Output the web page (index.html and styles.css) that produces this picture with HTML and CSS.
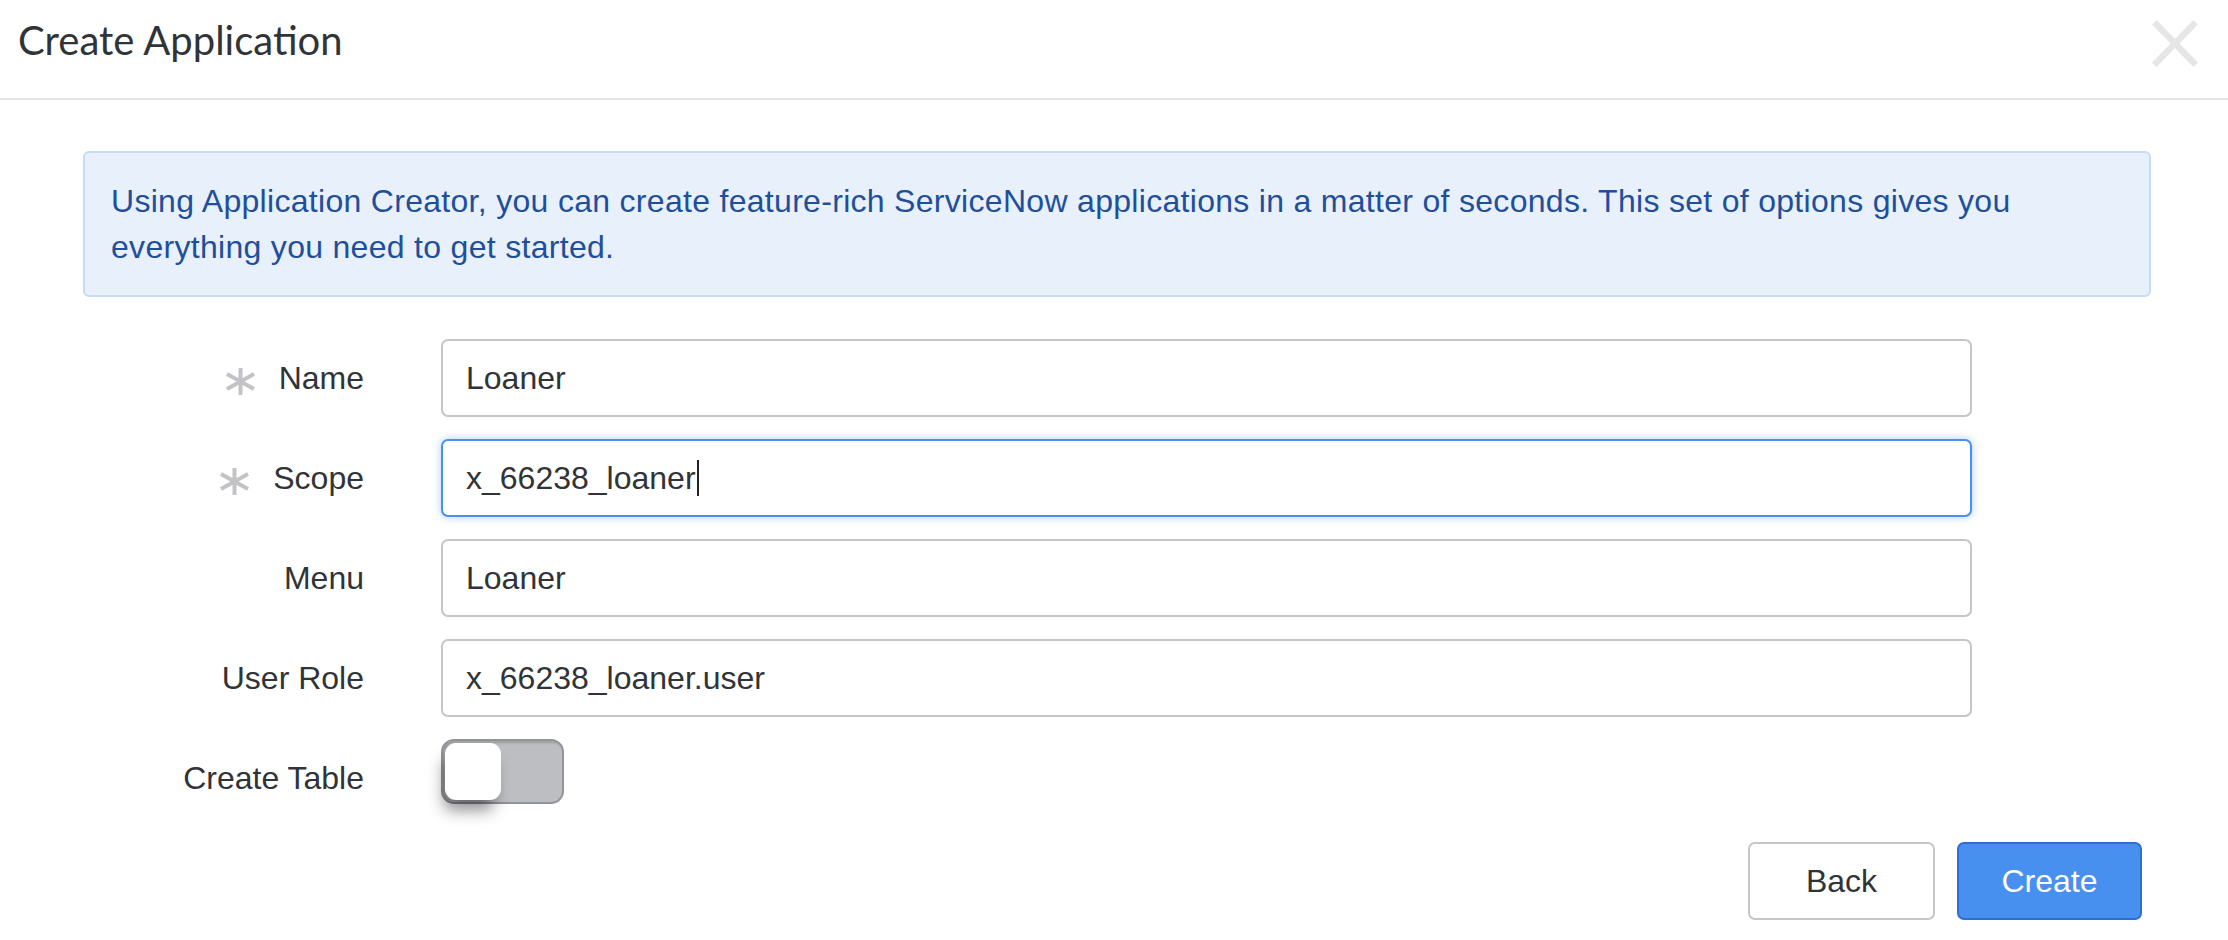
FILE: index.html
```html
<!DOCTYPE html>
<html lang="en">
<head>
<meta charset="utf-8">
<title>Create Application</title>
<link rel="stylesheet" href="styles.css">
</head>
<body>
<div class="modal">
  <header class="modal-header">
    <h1 class="modal-title">Create Application</h1>
    <button class="close" aria-label="Close">
      <svg width="46" height="47" viewBox="0 0 46 47"><path d="M2.3 2.3 L43.7 44.7 M43.7 2.3 L2.3 44.7" stroke="#e6e6e6" stroke-width="6.5" fill="none"/></svg>
    </button>
  </header>
  <div class="modal-body">
    <div class="alert">Using Application Creator, you can create feature-rich ServiceNow applications in a matter of seconds. This set of options gives you everything you need to get started.</div>
    <div class="form">
      <div class="label"><svg class="req" width="31" height="27" viewBox="0 0 31 27"><path d="M15.5 0 V27 M2 6 L29 21 M2 21 L29 6" stroke="#c3c3c7" stroke-width="4" fill="none"/></svg><span>Name</span></div>
      <div class="field">Loaner</div>
      <div class="label"><svg class="req" width="31" height="27" viewBox="0 0 31 27"><path d="M15.5 0 V27 M2 6 L29 21 M2 21 L29 6" stroke="#c3c3c7" stroke-width="4" fill="none"/></svg><span>Scope</span></div>
      <div class="field focus">x_66238_loaner<span class="caret"></span></div>
      <div class="label"><span>Menu</span></div>
      <div class="field">Loaner</div>
      <div class="label"><span>User Role</span></div>
      <div class="field">x_66238_loaner.user</div>
      <div class="label"><span>Create Table</span></div>
      <div class="toggle-cell"><div class="toggle"><div class="knob"></div></div></div>
    </div>
    <div class="footer">
      <button class="btn btn-back">Back</button>
      <button class="btn btn-create">Create</button>
    </div>
  </div>
</div>
</body>
</html>
```
FILE: styles.css
```css
html, body {
  margin: 0;
  padding: 0;
  background: #ffffff;
}

body {
  font-family: "Liberation Sans", Arial, Helvetica, sans-serif;
  color: #303438;
}

.modal {
  width: 2228px;
}

.modal-header {
  box-sizing: border-box;
  height: 100px;
  border-bottom: 2px solid #e3e3e3;
  display: flex;
  justify-content: space-between;
  align-items: flex-start;
  padding: 16px 30px 0 18px;
}

.modal-title {
  margin: 0;
  font-family: Lato, "Open Sans", sans-serif;
  font-weight: 400;
  font-size: 40px;
  line-height: 48px;
  color: #303338;
}

.close {
  margin: 4px 0 0 0;
  padding: 0;
  border: 0;
  background: none;
  width: 46px;
  height: 47px;
  display: block;
}

.close svg {
  display: block;
}

.modal-body {
  padding: 51px 77px 0 83px;
}

.alert {
  border: 2px solid #c6dcf6;
  background: #e8f0fb;
  border-radius: 6px;
  padding: 26px 26px 25px 26px;
  font-size: 32px;
  line-height: 45.7px;
  letter-spacing: 0.3px;
  color: #1f4f9b;
}

.form {
  margin-top: 42px;
  display: grid;
  grid-template-columns: 281px 1531px;
  column-gap: 77px;
  row-gap: 22px;
  grid-auto-rows: 78px;
}

.label {
  display: flex;
  justify-content: flex-end;
  align-items: center;
  gap: 23px;
  font-size: 32px;
  color: #303438;
  white-space: nowrap;
}

.req {
  display: block;
  margin-top: 7px;
}

.field {
  box-sizing: border-box;
  height: 78px;
  border: 2px solid #c6c6ca;
  border-radius: 7px;
  padding: 0 23px;
  display: flex;
  align-items: center;
  font-size: 32px;
  color: #303438;
  background: #fff;
}

.field.focus {
  border-color: #4a90f0;
  box-shadow: 0 0 9px rgba(74, 144, 240, 0.45);
}

.caret {
  display: inline-block;
  width: 2px;
  height: 36px;
  background: #222;
  margin-left: 1px;
}

.toggle-cell {
  display: flex;
  align-items: flex-start;
}

.toggle {
  box-sizing: border-box;
  width: 123px;
  height: 65px;
  border-radius: 13px;
  background: #bdbec2;
  border: 2px solid #929397;
  box-shadow: inset 3px 2px 3px rgba(0, 0, 0, 0.18);
  padding: 2px;
}

.knob {
  width: 56px;
  height: 57px;
  background: #fff;
  border-radius: 11px;
  box-shadow: -4px 13px 16px -3px rgba(0, 0, 0, 0.45);
}

.footer {
  margin-top: 25px;
  display: flex;
  justify-content: flex-end;
  gap: 22px;
  padding-right: 9px;
}

.btn {
  box-sizing: border-box;
  height: 78px;
  border-radius: 7px;
  border: 2px solid #c6c6ca;
  font-family: "Liberation Sans", Arial, Helvetica, sans-serif;
  font-size: 32px;
  padding: 0;
  cursor: pointer;
}

.btn-back {
  width: 187px;
  background: #fff;
  color: #303438;
}

.btn-create {
  width: 185px;
  background: #4890f0;
  border-color: #2d6fd2;
  color: #fff;
}
```
